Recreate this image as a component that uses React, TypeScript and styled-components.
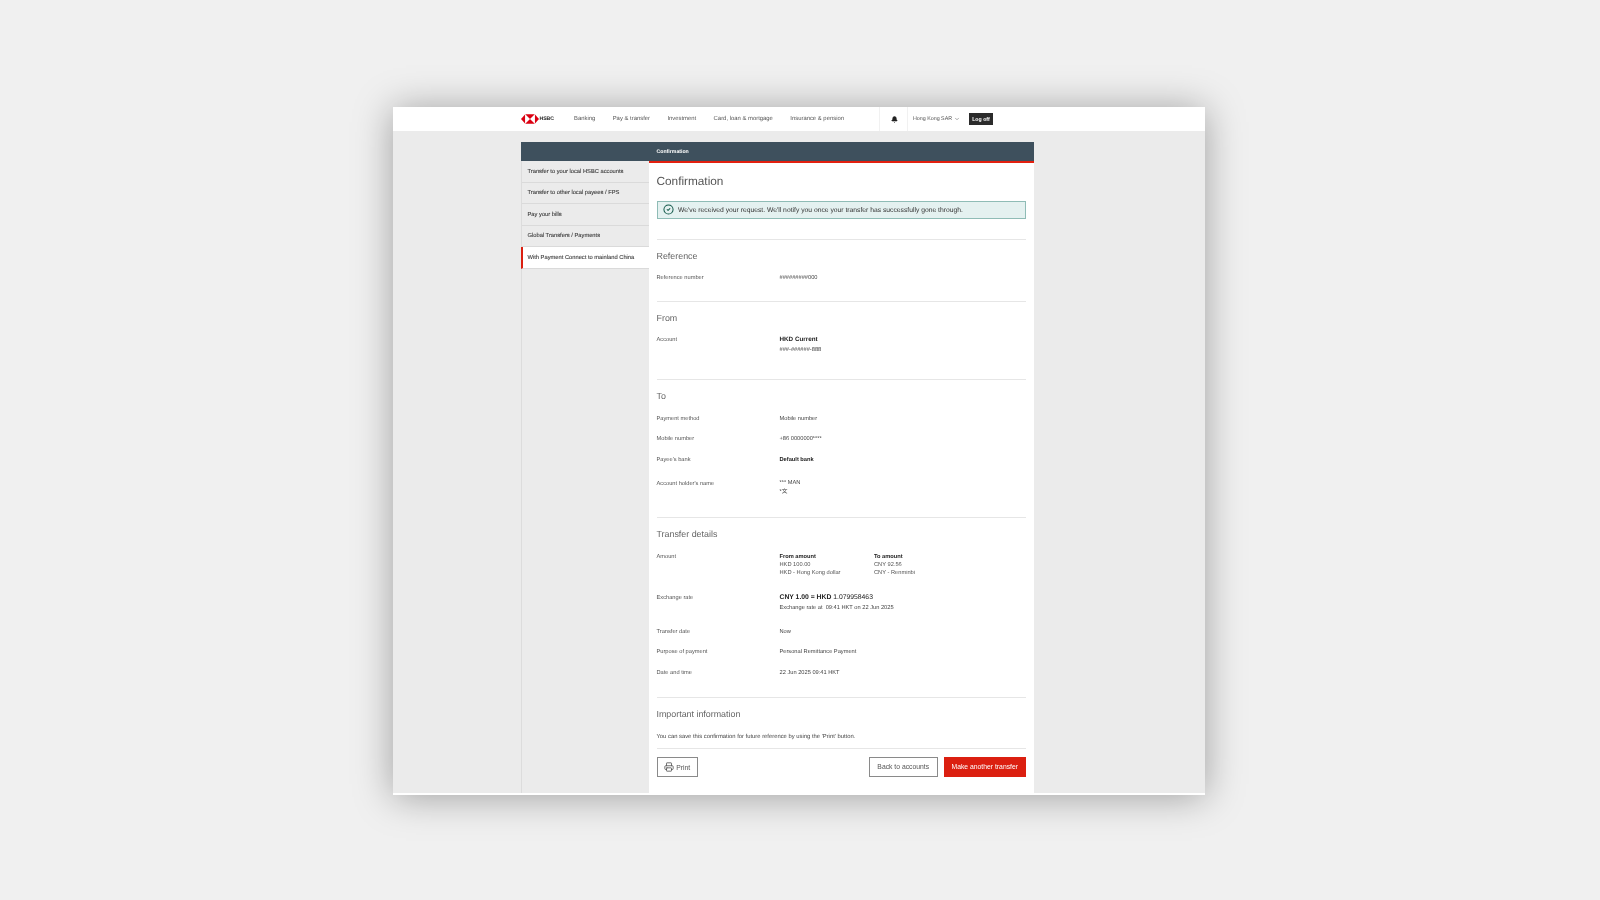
import React from "react";
import styled, { createGlobalStyle } from "styled-components";
import { Bell, ChevronDown, CircleCheck, Printer } from "lucide-react";

const Global = createGlobalStyle`
  html, body { margin: 0; padding: 0; background: #f0f0f0; }
  body { font-family: "Liberation Sans", "Noto Sans CJK SC", Arial, sans-serif; color: #333; text-rendering: geometricPrecision; }
`;
const Page = styled.div`
  width: 1600px; height: 900px; box-sizing: border-box; padding: 107px 0 0 393px; overflow: hidden;
  background: #f0f0f0;
`;
const Window = styled.div`
  width: 812px; height: 688px; display: flex; flex-direction: column; background: #fff; padding-bottom: 2px; box-sizing: border-box;
  box-shadow: 0 2px 36px rgba(0,0,0,.34);
  filter: blur(.35px);
`;
const Header = styled.header`
  height: 24px; flex: none; box-sizing: border-box; padding: 0 212px 1px 128px; display: flex; align-items: center; background: #fff;
`;
const Logo = styled.div`
  width: 33px; flex: none; display: flex; align-items: center; gap: .5px;
  font-size: 5.2px; font-weight: 700; color: #222; letter-spacing: -.1px;
`;
const Nav = styled.nav`
  display: flex; gap: 17.4px; margin-left: 20px; font-size: 5.9px; color: #555; flex: 1;
`;
const Tools = styled.div`
  display: flex; align-items: center; height: 23px; font-size: 5.35px; color: #555;
`;
const Tool = styled.div<{ $w: number }>`
  width: ${p => p.$w}px; height: 24px; display: flex; align-items: center; justify-content: center; gap: 2px; padding-left: 2px; padding-top: 1px;
  border-left: 1px solid #f1f1f1; box-sizing: border-box;
`;
const LogOff = styled.button`
  width: 24px; height: 12px; margin-left: 6px; padding: 0; border: 0; background: #2b2b2b; color: #fff;
  font: 700 5.2px "Liberation Sans", sans-serif;
`;
const Main = styled.main`
  flex: 1; min-height: 0; background: #ebebeb; padding: 10.7px 0 0 128px; display: flex; flex-direction: column;
`;
const Shell = styled.div`
  width: 513px; flex: 1; display: flex; flex-direction: column;
`;
const Bar = styled.div`
  height: 19.3px; flex: none; box-sizing: border-box; background: #3e505d; padding: 1px 0 0 135.5px; display: flex; align-items: center;
  color: #fff; font-size: 5.2px; font-weight: 700;
`;
const Body = styled.div`
  flex: 1; display: flex; min-height: 0;
`;
const Sidebar = styled.aside`
  width: 127.5px; flex: none; border-left: 1px solid #dcdcdc; box-sizing: border-box;
`;
const SideItem = styled.div<{ $active?: boolean }>`
  height: 21.6px; box-sizing: border-box; display: flex; align-items: center;
  padding-left: ${p => (p.$active ? "4.5px" : "5.5px")}; padding-top: .8px;
  border-bottom: 1px solid #dadada; font-size: 5.75px; color: #3a3a3a;
  -webkit-text-stroke: .1px #3a3a3a;
  background: ${p => (p.$active ? "#fff" : "transparent")};
  border-left: ${p => (p.$active ? "2px solid #db1f10" : "0")};
  margin-left: ${p => (p.$active ? "-1px" : "0")};
`;
const Content = styled.section`
  flex: 1; background: #fff; border-top: 2px solid #e3200f; padding: 0 8px; min-width: 0;
`;
const Title = styled.h1`
  margin: 0; padding-top: 10px; font-size: 11.8px; line-height: 16px; font-weight: 400; color: #555;
`;
const Alert = styled.div`
  margin-top: 11.7px; height: 18.3px; box-sizing: border-box; display: flex; align-items: center; gap: 4px; padding: 0 0 0 5.5px;
  background: #e4f1f0; border: 1px solid #8fbcb6; font-size: 6.75px; color: #333;
  svg { color: #155a4b; flex: none; }
`;
const AlertText = styled.span`
  padding-top: 1px;
`;
const Section = styled.div<{ $bottom: number }>`
  padding-bottom: ${p => p.$bottom}px; border-bottom: 1px solid #e6e6e6; padding-top: 10.5px;
`;
const FirstRule = styled.hr`
  margin: 20px 0 0; border: 0; border-top: 1px solid #e6e6e6;
`;
const Heading = styled.h2<{ $mb?: number; $up?: boolean }>`
  margin: ${p => (p.$up ? "-1px" : "0")} 0 ${p => p.$mb ?? 10.3}px; font-size: 8.9px; line-height: 12px; font-weight: 400; color: #666;
`;
const Row = styled.div<{ $gap?: number }>`
  display: grid; grid-template-columns: 123px 1fr; margin-top: ${p => p.$gap ?? 0}px; font-size: 5.7px; line-height: 10px; color: #555;
`;
const Value = styled.div<{ $lh?: number }>`
  color: #444; ${p => (p.$lh ? `line-height:${p.$lh}px;` : "")}
`;
const Strong = styled.span<{ $size?: number }>`
  display: block; font-weight: 700; color: #222; font-size: ${p => p.$size ?? 5.7}px;
`;
const Big = styled.div`
  font-size: 6.8px; color: #222;
`;
const BoldInline = styled.b`
  font-weight: 700;
`;
const Amounts = styled.div`
  display: grid; grid-template-columns: 94.5px 1fr; line-height: 8.4px; padding-top: .8px;
`;
const Note = styled.p`
  margin: 0; font-size: 5.85px; line-height: 10px; color: #444;
`;
const Actions = styled.div`
  display: flex; align-items: flex-start; gap: 5.5px; margin-top: 7.5px;
`;
const Btn = styled.button<{ $primary?: boolean }>`
  height: 20px; padding: 0; box-sizing: border-box; font: 400 6.8px "Liberation Sans", sans-serif;
  background: ${p => (p.$primary ? "#db1f10" : "#fff")}; color: ${p => (p.$primary ? "#fff" : "#555")};
  border: 1px solid ${p => (p.$primary ? "#db1f10" : "#8a8a8a")};
`;
const PrintBtn = styled(Btn)`
  width: 41.5px; margin-right: auto; display: flex; align-items: center; justify-content: center; gap: 2px;
`;
const PrintLabel = styled.span`
  padding-top: 1.5px;
`;
const BackBtn = styled(Btn)`width: 69.5px;`;
const MakeBtn = styled(Btn)`width: 82.5px;`;

const HsbcMark = () => (
  <svg width="18" height="10" viewBox="0 0 34 18" aria-hidden="true">
    <polygon points="0,9 8,0 8,18" fill="#db0011" />
    <polygon points="34,9 26,0 26,18" fill="#db0011" />
    <rect x="8" y="0" width="18" height="18" fill="#fff" />
    <polygon points="8,0 26,0 17,9" fill="#db0011" />
    <polygon points="8,18 26,18 17,9" fill="#db0011" />
  </svg>
);

const sideItems = [
  "Transfer to your local HSBC accounts",
  "Transfer to other local payees / FPS",
  "Pay your bills",
  "Global Transfers / Payments",
];

export default function App() {
  return (
    <Page>
      <Global />
      <Window>
        <Header>
          <Logo><HsbcMark />HSBC</Logo>
          <Nav>
            <span>Banking</span><span>Pay &amp; transfer</span><span>Investment</span>
            <span>Card, loan &amp; mortgage</span><span>Insurance &amp; pension</span>
          </Nav>
          <Tools>
            <Tool $w={28}><Bell size={7} fill="#222" color="#222" /></Tool>
            <Tool $w={56}>Hong Kong SAR <ChevronDown size={6} /></Tool>
            <LogOff>Log off</LogOff>
          </Tools>
        </Header>
        <Main>
          <Shell>
            <Bar>Confirmation</Bar>
            <Body>
              <Sidebar>
                {sideItems.map(t => <SideItem key={t}>{t}</SideItem>)}
                <SideItem $active>With Payment Connect to mainland China</SideItem>
              </Sidebar>
              <Content>
                <Title>Confirmation</Title>
                <Alert>
                  <CircleCheck size={11} strokeWidth={2.2} />
                  <AlertText>We've received your request. We'll notify you once your transfer has successfully gone through.</AlertText>
                </Alert>
                <FirstRule />
                <Section $bottom={18}>
                  <Heading $mb={10.3}>Reference</Heading>
                  <Row><span>Reference number</span><Value>#########000</Value></Row>
                </Section>
                <Section $bottom={24}>
                  <Heading $mb={10.8}>From</Heading>
                  <Row><span>Account</span><Value><Strong $size={6.3}>HKD Current</Strong>###-######-888</Value></Row>
                </Section>
                <Section $bottom={19.5}>
                  <Heading $up $mb={12.3}>To</Heading>
                  <Row><span>Payment method</span><Value>Mobile number</Value></Row>
                  <Row $gap={10.4}><span>Mobile number</span><Value>+86 0000000****</Value></Row>
                  <Row $gap={10.3}><span>Payee's bank</span><Value><Strong>Default bank</Strong></Value></Row>
                  <Row $gap={14.5}><span>Account holder's name</span><Value $lh={9.2}>*** MAN<br />*文</Value></Row>
                </Section>
                <Section $bottom={19}>
                  <Heading $mb={11.3}>Transfer details</Heading>
                  <Row>
                    <span>Amount</span>
                    <Amounts>
                      <div><Strong>From amount</Strong>HKD 100.00<br />HKD - Hong Kong dollar</div>
                      <div><Strong>To amount</Strong>CNY 92.56<br />CNY - Renminbi</div>
                    </Amounts>
                  </Row>
                  <Row $gap={15.5}>
                    <span>Exchange rate</span>
                    <Value><Big><BoldInline>CNY 1.00 = HKD</BoldInline> 1.079958463</Big>Exchange rate at&nbsp; 09:41 HKT on 22 Jun 2025</Value>
                  </Row>
                  <Row $gap={13.3}><span>Transfer date</span><Value>Now</Value></Row>
                  <Row $gap={10.6}><span>Purpose of payment</span><Value>Personal Remittance Payment</Value></Row>
                  <Row $gap={10.4}><span>Date and time</span><Value>22 Jun 2025 09:41 HKT</Value></Row>
                </Section>
                <Section $bottom={6.5}>
                  <Heading $mb={11.5}>Important information</Heading>
                  <Note>You can save this confirmation for future reference by using the 'Print' button.</Note>
                </Section>
                <Actions>
                  <PrintBtn><Printer size={10} /><PrintLabel>Print</PrintLabel></PrintBtn>
                  <BackBtn>Back to accounts</BackBtn>
                  <MakeBtn $primary>Make another transfer</MakeBtn>
                </Actions>
              </Content>
            </Body>
          </Shell>
        </Main>
      </Window>
    </Page>
  );
}
